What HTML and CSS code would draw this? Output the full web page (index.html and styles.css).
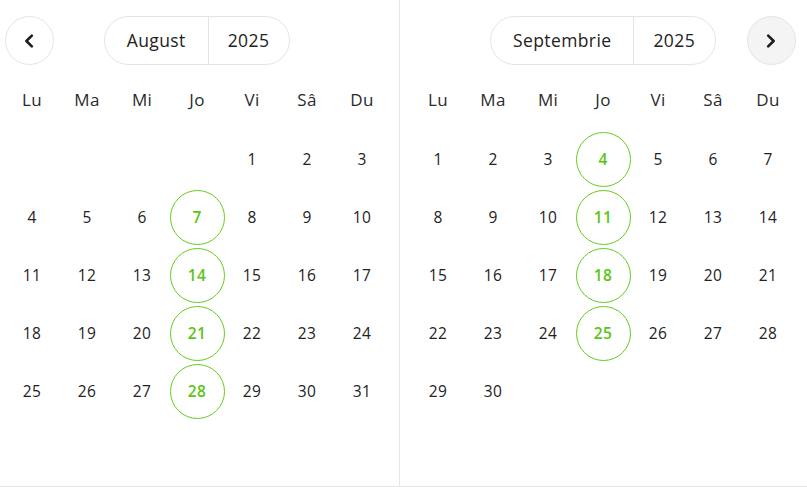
FILE: index.html
```html
<!DOCTYPE html>
<html lang="ro">
<head>
<meta charset="utf-8">
<link rel="stylesheet" href="styles.css">
</head>
<body>
<div class="calendar">
  <section class="panel panel-left">
    <div class="nav">
      <button class="nav-btn" aria-label="Luna anterioară">
        <svg width="12" height="14" viewBox="0 0 12 14"><path d="M8.8 1.6 L3.4 7 L8.8 12.4" fill="none" stroke="#1d1d1d" stroke-width="2.6" stroke-linecap="round" stroke-linejoin="round"/></svg>
      </button>
      <div class="pill"><span class="pill-part">August</span><span class="pill-part">2025</span></div>
      <span></span>
    </div>
    <div class="grid">
      <div class="wd">Lu</div><div class="wd">Ma</div><div class="wd">Mi</div><div class="wd">Jo</div><div class="wd">Vi</div><div class="wd">Sâ</div><div class="wd">Du</div>
      <div></div><div></div><div></div><div></div>
      <div class="d">1</div><div class="d">2</div><div class="d">3</div>
      <div class="d">4</div><div class="d">5</div><div class="d">6</div><div class="d on">7</div><div class="d">8</div><div class="d">9</div><div class="d">10</div>
      <div class="d">11</div><div class="d">12</div><div class="d">13</div><div class="d on">14</div><div class="d">15</div><div class="d">16</div><div class="d">17</div>
      <div class="d">18</div><div class="d">19</div><div class="d">20</div><div class="d on">21</div><div class="d">22</div><div class="d">23</div><div class="d">24</div>
      <div class="d">25</div><div class="d">26</div><div class="d">27</div><div class="d on">28</div><div class="d">29</div><div class="d">30</div><div class="d">31</div>
    </div>
  </section>
  <section class="panel panel-right">
    <div class="nav">
      <span></span>
      <div class="pill"><span class="pill-part">Septembrie</span><span class="pill-part">2025</span></div>
      <button class="nav-btn nav-btn-filled" aria-label="Luna următoare">
        <svg width="12" height="14" viewBox="0 0 12 14"><path d="M3.2 1.6 L8.6 7 L3.2 12.4" fill="none" stroke="#1d1d1d" stroke-width="2.6" stroke-linecap="round" stroke-linejoin="round"/></svg>
      </button>
    </div>
    <div class="grid">
      <div class="wd">Lu</div><div class="wd">Ma</div><div class="wd">Mi</div><div class="wd">Jo</div><div class="wd">Vi</div><div class="wd">Sâ</div><div class="wd">Du</div>
      <div class="d">1</div><div class="d">2</div><div class="d">3</div><div class="d on">4</div><div class="d">5</div><div class="d">6</div><div class="d">7</div>
      <div class="d">8</div><div class="d">9</div><div class="d">10</div><div class="d on">11</div><div class="d">12</div><div class="d">13</div><div class="d">14</div>
      <div class="d">15</div><div class="d">16</div><div class="d">17</div><div class="d on">18</div><div class="d">19</div><div class="d">20</div><div class="d">21</div>
      <div class="d">22</div><div class="d">23</div><div class="d">24</div><div class="d on">25</div><div class="d">26</div><div class="d">27</div><div class="d">28</div>
      <div class="d">29</div><div class="d">30</div>
    </div>
  </section>
</div>
</body>
</html>
```
FILE: styles.css
```css
* { box-sizing: border-box; }
html, body { margin: 0; padding: 0; background: #fff; }
body {
  font-family: "Open Sans", "Noto Sans", sans-serif;
  color: #222;
  width: 807px;
  height: 487px;
  overflow: hidden;
}
.calendar {
  display: flex;
  height: 487px;
  border-bottom: 1px solid #e6e6e6;
}
.panel {
  padding-top: 16px;
}
.panel-left {
  width: 400px;
  padding-left: 4.5px;
  border-right: 1px solid #e6e6e6;
}
.panel-right {
  flex: 1;
  padding-left: 10.5px;
}
.nav {
  width: 385px;
  display: grid;
  grid-template-columns: 50px 1fr 50px;
  align-items: center;
  justify-items: center;
  height: 49px;
}
.nav-btn {
  width: 49px;
  height: 49px;
  border-radius: 50%;
  border: 1px solid #e4e4e4;
  background: #fff;
  display: flex;
  align-items: center;
  justify-content: center;
  padding: 0;
  justify-self: start;
}
.nav-btn-filled {
  background: #f4f4f4;
  justify-self: end;
}
.pill {
  display: flex;
  height: 49px;
  border: 1px solid #e4e4e4;
  border-radius: 25px;
  font-size: 17.5px;
  letter-spacing: 0.4px;
  color: #222;
}
.pill-part {
  display: flex;
  align-items: center;
  padding: 0 22px 1px;
}
.pill-part + .pill-part {
  border-left: 1px solid #e4e4e4;
  padding: 0 20px 1px 19px;
}
.grid {
  margin-top: 9px;
  width: 385px;
  display: grid;
  grid-template-columns: repeat(7, 55px);
  grid-auto-rows: 55px;
  row-gap: 3px;
}
.wd {
  display: flex;
  align-items: center;
  justify-content: center;
  font-size: 17px;
  letter-spacing: 0.3px;
  color: #2a2a2a;
  padding-bottom: 4px;
}
.d {
  display: flex;
  align-items: center;
  justify-content: center;
  font-size: 15.5px;
  letter-spacing: 0.3px;
  color: #222;
  border-radius: 50%;
  padding-bottom: 2px;
}
.d.on {
  border: 1px solid #66cc1a;
  color: #5cc414;
  font-weight: 600;
}
```
